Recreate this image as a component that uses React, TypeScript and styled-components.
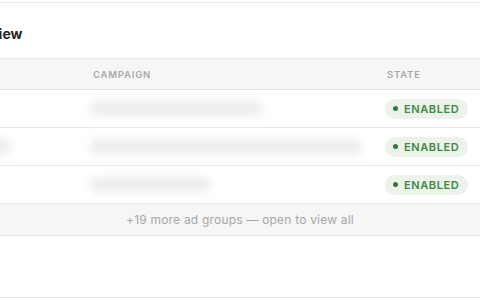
import React from 'react';
import styled, { createGlobalStyle } from 'styled-components';

const Global = createGlobalStyle`
  html, body {
    margin: 0;
    padding: 0;
    background: #ffffff;
    overflow: hidden;
  }
  body {
    font-family: Inter, "Noto Sans", "Liberation Sans", sans-serif;
    -webkit-font-smoothing: antialiased;
  }
`;

type Group = { lead: number; campaign: number };

const groups: Group[] = [
  { lead: 0, campaign: 172 },
  { lead: 58, campaign: 272 },
  { lead: 0, campaign: 120 },
];

const App: React.FC = () => {
  return (
    <>
      <Global />
      <Page>
        <Card>
          <Title>Overview</Title>
          <Table>
            <HeadRow>
              <HeadCell />
              <HeadCell>Campaign</HeadCell>
              <HeadCell>State</HeadCell>
            </HeadRow>
            {groups.map((g, i) => (
              <Row key={i}>
                <Cell>{g.lead > 0 && <Redacted $w={g.lead} />}</Cell>
                <Cell>
                  <Redacted $w={g.campaign} />
                </Cell>
                <Cell>
                  <Pill>
                    <Dot />
                    ENABLED
                  </Pill>
                </Cell>
              </Row>
            ))}
            <More>+19 more ad groups — open to view all</More>
          </Table>
        </Card>
      </Page>
    </>
  );
};

const Page = styled.div`
  width: 480px;
  height: 300px;
  overflow: hidden;
  padding-top: 2px;
  box-sizing: border-box;
`;

const Card = styled.div`
  width: 568px;
  margin-left: -44px;
  border-top: 1px solid #e9e9e9;
  border-bottom: 1px solid #e9e9e9;
  padding-bottom: 61px;
`;

const Title = styled.h2`
  margin: 0;
  padding: 21px 0 0 0;
  height: 34px;
  font-size: 14px;
  line-height: 20px;
  font-weight: 700;
  color: #262626;
  text-indent: 1px;
`;

const Table = styled.div`
  display: flex;
  flex-direction: column;
`;

const HeadRow = styled.div`
  display: grid;
  grid-template-columns: 137px 294px 1fr;
  align-items: center;
  height: 30px;
  background: #f6f6f6;
  border-top: 1px solid #e8e8e8;
  border-bottom: 1px solid #e4e4e4;
`;

const HeadCell = styled.div`
  font-size: 9.5px;
  font-weight: 600;
  letter-spacing: 0.8px;
  text-transform: uppercase;
  color: #a9a9a9;
`;

const Row = styled.div`
  display: grid;
  grid-template-columns: 137px 294px 1fr;
  align-items: center;
  height: 37px;
  border-bottom: 1px solid #e8e8e8;
`;

const Cell = styled.div`
  display: flex;
  align-items: center;
  min-width: 0;
`;

const Redacted = styled.div<{ $w: number }>`
  width: ${(p) => p.$w}px;
  height: 15px;
  margin-left: -3px;
  border-radius: 7px;
  background: #ececec;
  filter: blur(4px);
`;

const Pill = styled.span`
  display: inline-flex;
  align-items: center;
  gap: 6px;
  height: 20px;
  padding: 0 9px 0 8px;
  margin-left: -2px;
  border-radius: 10px;
  background: #ecf3ea;
  color: #3d8a45;
  font-size: 11px;
  font-weight: 600;
  letter-spacing: 0.6px;
`;

const Dot = styled.span`
  width: 5px;
  height: 5px;
  border-radius: 50%;
  background: #2f7a3a;
`;

const More = styled.div`
  height: 31px;
  display: flex;
  align-items: center;
  justify-content: center;
  background: #f6f6f6;
  border-bottom: 1px solid #e4e4e4;
  font-size: 12px;
  color: #a6a6a6;
  letter-spacing: 0.2px;
`;

export default App;
